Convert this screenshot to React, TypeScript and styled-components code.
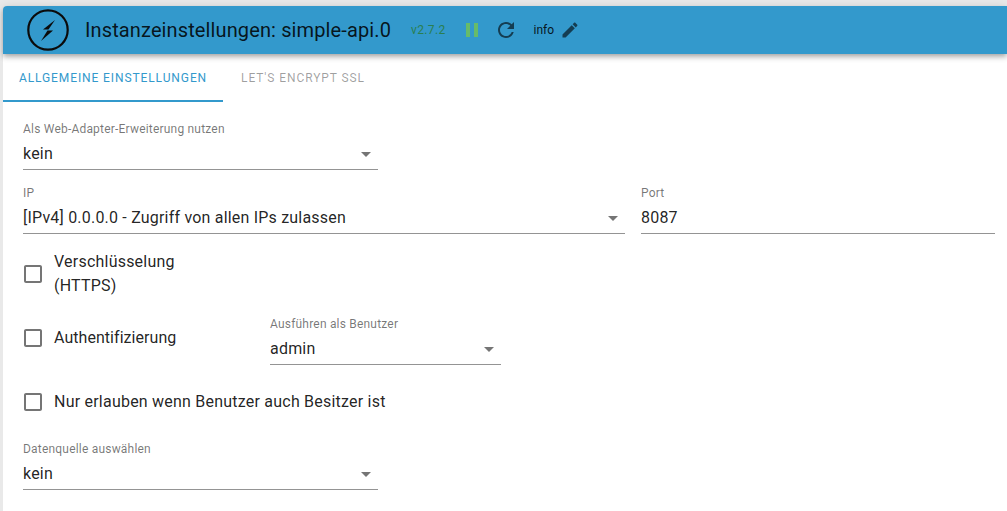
import React from 'react';
import styled, { createGlobalStyle } from 'styled-components';

const GlobalStyle = createGlobalStyle`
  html, body {
    margin: 0;
    padding: 0;
    height: 511px;
    overflow: hidden;
    background-color: #e9e9e9;
    font-family: Roboto, "Liberation Sans", sans-serif;
  }
`;

const Page = styled.div`
  height: 511px;
  padding: 6px 0 0 3px;
  box-sizing: border-box;
  overflow: hidden;
`;

const Panel = styled.div`
  height: 505px;
  background-color: #fff;
  border-radius: 4px 0 0 0;
`;

const Header = styled.header`
  position: relative;
  display: flex;
  align-items: center;
  height: 48px;
  padding-left: 24px;
  background-color: #3399cc;
  border-radius: 4px 0 0 0;
  box-shadow: 0 2px 4px -1px rgba(0, 0, 0, 0.2), 0 4px 5px 0 rgba(0, 0, 0, 0.14), 0 1px 10px 0 rgba(0, 0, 0, 0.12);
`;

const Logo = styled.svg`
  width: 42px;
  height: 42px;
  flex: none;
`;

const Title = styled.h1`
  margin: 0 0 0 16px;
  font-size: 20px;
  font-weight: 400;
  line-height: 24px;
  letter-spacing: 0.12px;
  color: rgba(0, 0, 0, 0.87);
  white-space: nowrap;
`;

const Version = styled.span`
  margin-left: 20px;
  font-size: 12px;
  letter-spacing: 0.35px;
  color: #2a7f50;
`;

const IconSlot = styled.svg<{ $color: string; $gap: number; $size?: number }>`
  width: ${props => props.$size ?? 24}px;
  height: ${props => props.$size ?? 24}px;
  flex: none;
  margin-left: ${props => props.$gap}px;
  fill: ${props => props.$color};
`;

const InfoText = styled.span`
  margin-left: 16px;
  font-size: 12px;
  color: rgba(0, 0, 0, 0.87);
`;

const Tabs = styled.nav`
  display: flex;
  height: 48px;
`;

const Tab = styled.div<{ $active?: boolean }>`
  display: flex;
  align-items: center;
  justify-content: center;
  box-sizing: border-box;
  width: ${props => (props.$active ? '220px' : '160px')};
  height: 48px;
  padding-top: 2px;
  font-size: 12px;
  font-weight: 400;
  letter-spacing: 0.9px;
  text-transform: uppercase;
  color: ${props => (props.$active ? '#3399cc' : 'rgba(0, 0, 0, 0.38)')};
  border-bottom: 2px solid ${props => (props.$active ? '#3399cc' : 'transparent')};
`;

const Form = styled.form`
  display: flex;
  flex-direction: column;
  padding: 20px 12px 0 20px;
`;

const Row = styled.div<{ $top: number }>`
  display: flex;
  align-items: flex-end;
  margin-top: ${props => props.$top}px;
`;

const Field = styled.div<{ $width?: number; $left?: number }>`
  display: flex;
  flex-direction: column;
  flex: ${props => (props.$width ? `0 0 ${props.$width}px` : '1 1 auto')};
  margin-left: ${props => props.$left ?? 0}px;
`;

const FieldLabel = styled.label`
  font-size: 12px;
  line-height: 14px;
  letter-spacing: 0.2px;
  color: rgba(0, 0, 0, 0.54);
`;

const FieldControl = styled.div`
  display: flex;
  align-items: center;
  justify-content: space-between;
  height: 31px;
  margin-top: 2px;
  border-bottom: 1px solid #949494;
  font-size: 16px;
  letter-spacing: 0.2px;
  color: rgba(0, 0, 0, 0.87);
`;

const Caret = styled.svg`
  width: 24px;
  height: 24px;
  fill: rgba(0, 0, 0, 0.54);
`;

const CheckRow = styled.label<{ $top: number }>`
  display: flex;
  align-items: center;
  margin-top: ${props => props.$top}px;
`;

const CheckIcon = styled.svg`
  width: 24px;
  height: 24px;
  flex: none;
  margin-left: -2px;
  fill: #757575;
`;

const CheckText = styled.span<{ $narrow?: boolean }>`
  margin-left: 9px;
  width: ${props => (props.$narrow ? '140px' : 'auto')};
  font-size: 16px;
  line-height: 24px;
  letter-spacing: 0.22px;
  color: rgba(0, 0, 0, 0.87);
`;

const AuthRow = styled.div`
  display: flex;
  align-items: flex-end;
  margin-top: 19px;
`;

const AuthCheck = styled(CheckRow)`
  align-self: flex-start;
  width: 247px;
  height: 42px;
`;

const AuthText = styled(CheckText)`
  letter-spacing: 0.05px;
`;

const Checkbox = ({ children, narrow, top = 0 }: { children: React.ReactNode; narrow?: boolean; top?: number }) => (
  <CheckRow $top={top}>
    <CheckIcon viewBox="0 0 24 24">
      <path d="M19 5v14H5V5h14m0-2H5c-1.1 0-2 .9-2 2v14c0 1.1.9 2 2 2h14c1.1 0 2-.9 2-2V5c0-1.1-.9-2-2-2z" />
    </CheckIcon>
    <CheckText $narrow={narrow}>{children}</CheckText>
  </CheckRow>
);

const SelectField = ({ label, value, width, left }: { label: string; value: string; width?: number; left?: number }) => (
  <Field $width={width} $left={left}>
    <FieldLabel>{label}</FieldLabel>
    <FieldControl>
      {value}
      <Caret viewBox="0 0 24 24">
        <path d="M7 10l5 5 5-5z" />
      </Caret>
    </FieldControl>
  </Field>
);

export default function App() {
  return (
    <>
      <GlobalStyle />
      <Page>
        <Panel>
          <Header>
            <Logo viewBox="0 0 42 42">
              <circle cx="21" cy="21" r="19.7" fill="none" stroke="#0b0b0b" strokeWidth="2.2" />
              <path d="M28 11 L16 20.5 L21.5 20.5 Z" fill="#0b0b0b" />
              <path d="M20.5 21.5 L26 21.5 L14 32 Z" fill="#0b0b0b" />
            </Logo>
            <Title>Instanzeinstellungen: simple-api.0</Title>
            <Version>v2.7.2</Version>
            <IconSlot $color="#66bb6a" $gap={14} viewBox="0 0 24 24">
              <path d="M6 19h4V5H6v14zm8-14v14h4V5h-4z" />
            </IconSlot>
            <IconSlot $color="rgba(0,0,0,0.6)" $gap={10} viewBox="0 0 24 24">
              <path d="M17.65 6.35C16.2 4.9 14.21 4 12 4c-4.42 0-7.99 3.58-7.99 8s3.57 8 7.99 8c3.73 0 6.84-2.55 7.73-6h-2.08c-.82 2.33-3.04 4-5.65 4-3.31 0-6-2.69-6-6s2.69-6 6-6c1.66 0 3.14.69 4.22 1.78L13 11h7V4l-2.35 2.35z" />
            </IconSlot>
            <InfoText>info</InfoText>
            <IconSlot $color="rgba(0,0,0,0.6)" $gap={6} $size={20} viewBox="0 0 24 24">
              <path d="M3 17.25V21h3.75L17.81 9.94l-3.75-3.75L3 17.25zM20.71 7.04c.39-.39.39-1.02 0-1.41l-2.34-2.34c-.39-.39-1.02-.39-1.41 0l-1.83 1.83 3.75 3.75 1.83-1.83z" />
            </IconSlot>
          </Header>
          <Tabs>
            <Tab $active>Allgemeine Einstellungen</Tab>
            <Tab>Let's Encrypt SSL</Tab>
          </Tabs>
          <Form>
            <Row $top={0}>
              <SelectField label="Als Web-Adapter-Erweiterung nutzen" value="kein" width={355} />
            </Row>
            <Row $top={16}>
              <SelectField label="IP" value="[IPv4] 0.0.0.0 - Zugriff von allen IPs zulassen" width={602} />
              <Field $left={16}>
                <FieldLabel>Port</FieldLabel>
                <FieldControl>8087</FieldControl>
              </Field>
            </Row>
            <Checkbox narrow top={16}>
              Verschlüsselung (HTTPS)
            </Checkbox>
            <AuthRow>
              <AuthCheck $top={0}>
                <CheckIcon viewBox="0 0 24 24">
                  <path d="M19 5v14H5V5h14m0-2H5c-1.1 0-2 .9-2 2v14c0 1.1.9 2 2 2h14c1.1 0 2-.9 2-2V5c0-1.1-.9-2-2-2z" />
                </CheckIcon>
                <AuthText>Authentifizierung</AuthText>
              </AuthCheck>
              <SelectField label="Ausführen als Benutzer" value="admin" width={231} />
            </AuthRow>
            <Checkbox top={25}>Nur erlauben wenn Benutzer auch Besitzer ist</Checkbox>
            <Row $top={28}>
              <SelectField label="Datenquelle auswählen" value="kein" width={355} />
            </Row>
          </Form>
        </Panel>
      </Page>
    </>
  );
}
